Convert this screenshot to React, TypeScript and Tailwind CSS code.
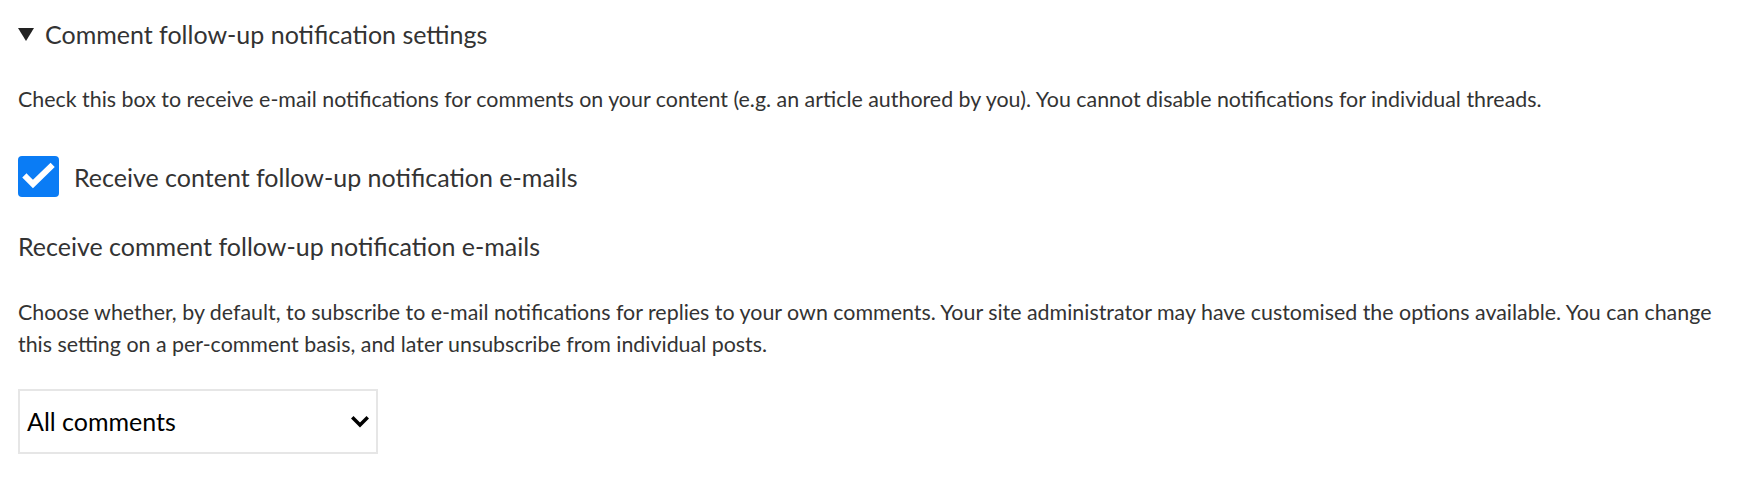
import { useState } from 'react'

function App() {
  const [checked, setChecked] = useState(true)

  return (
    <div className="min-h-screen bg-white pt-[19px] pl-[18px] pr-[30px] text-[#333333] font-['Lato','Liberation_Sans',sans-serif]">
      {/* Section toggle */}
      <div className="flex h-[30px] items-center gap-[11px]">
        <svg width="16" height="13" viewBox="0 0 16 13" className="shrink-0">
          <polygon points="0,0 16,0 8,13" fill="#222222" />
        </svg>
        <span className="text-[25px] leading-[30px]">Comment follow-up notification settings</span>
      </div>

      <p className="mt-[35px] text-[21.4px] leading-[31px]">
        Check this box to receive e-mail notifications for comments on your content (e.g. an article authored by you). You cannot disable notifications for individual threads.
      </p>

      {/* Checkbox row */}
      <label className="mt-[41px] flex h-[41px] items-center gap-[15px] cursor-pointer">
        <button
          type="button"
          onClick={() => setChecked(!checked)}
          className={checked ? 'h-[41px] w-[41px] shrink-0 rounded-[4px] bg-[#0a7cf5]' : 'h-[41px] w-[41px] shrink-0 rounded-[4px] border-2 border-[#cccccc] bg-white'}
        >
          {checked && (
            <svg width="41" height="41" viewBox="0 0 41 41" className="block">
              <path d="M8.5 21.5 L15 28 L32.5 11" stroke="#ffffff" strokeWidth="6" fill="none" strokeLinecap="square" />
            </svg>
          )}
        </button>
        <span className="text-[25px] leading-[30px]">Receive content follow-up notification e-mails</span>
      </label>

      <div className="mt-[34px] text-[25px] leading-[30px]">Receive comment follow-up notification e-mails</div>

      <p className="mt-[36px] text-[21.4px] leading-[31.5px]">
        Choose whether, by default, to subscribe to e-mail notifications for replies to your own comments. Your site administrator may have customised the options available. You can change this setting on a per-comment basis, and later unsubscribe from individual posts.
      </p>

      {/* Select */}
      <div className="mt-[29px] flex h-[65px] w-[360px] items-center justify-between border-2 border-[#e6e6e6] bg-white pl-[7px] pr-[7px]">
        <span className="text-[25px] text-black">All comments</span>
        <svg width="18" height="12" viewBox="0 0 18 12">
          <path d="M2.5 2.5 L9 9 L15.5 2.5" stroke="#000000" strokeWidth="3.5" fill="none" strokeLinecap="square" />
        </svg>
      </div>
    </div>
  )
}

export default App
